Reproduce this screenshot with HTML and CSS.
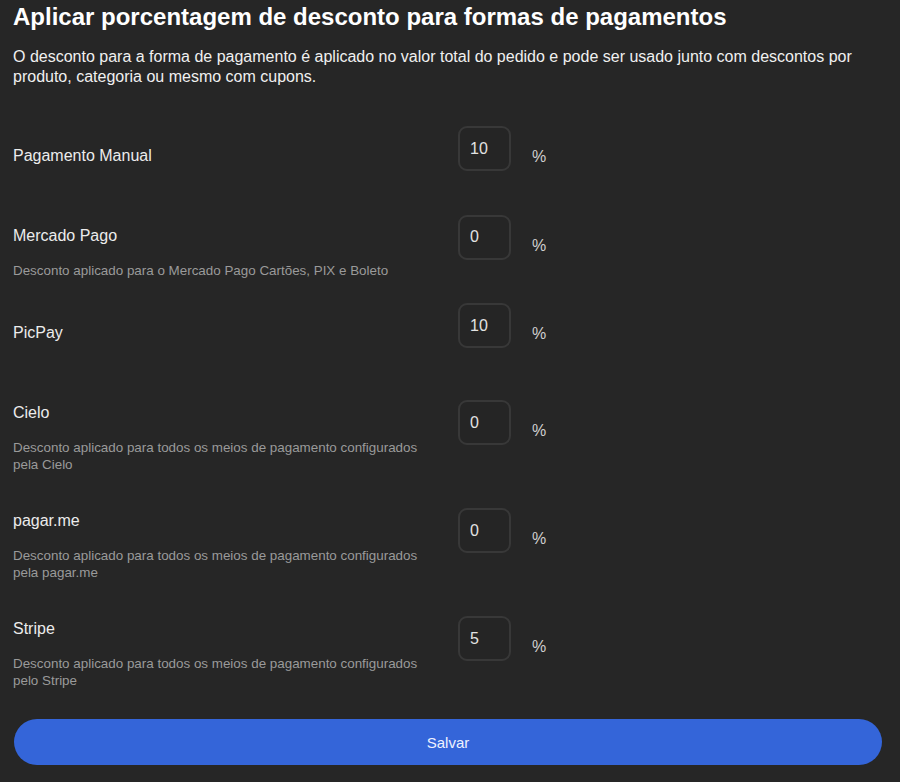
FILE: index.html
```html
<!DOCTYPE html>
<html lang="pt-BR">
<head>
<meta charset="utf-8">
<title>Descontos por forma de pagamento</title>
<link rel="stylesheet" href="styles.css">
</head>
<body>
<form class="discounts">
  <h1 class="discounts-title">Aplicar porcentagem de desconto para formas de pagamentos</h1>
  <p class="discounts-intro">O desconto para a forma de pagamento é aplicado no valor total do pedido e pode ser usado junto com descontos por produto, categoria ou mesmo com cupons.</p>

  <div class="gateways">
    <div class="gateway">
      <div class="gateway-info">
        <div class="gateway-name">Pagamento Manual</div>
      </div>
      <div class="rate">
        <div class="rate-box"><input class="rate-input" type="text" value="10"></div>
        <span class="rate-unit">%</span>
      </div>
    </div>

    <div class="gateway">
      <div class="gateway-info">
        <div class="gateway-name">Mercado Pago</div>
        <div class="gateway-help">Desconto aplicado para o Mercado Pago Cartões, PIX e Boleto</div>
      </div>
      <div class="rate">
        <div class="rate-box"><input class="rate-input" type="text" value="0"></div>
        <span class="rate-unit">%</span>
      </div>
    </div>

    <div class="gateway">
      <div class="gateway-info">
        <div class="gateway-name">PicPay</div>
      </div>
      <div class="rate">
        <div class="rate-box"><input class="rate-input" type="text" value="10"></div>
        <span class="rate-unit">%</span>
      </div>
    </div>

    <div class="gateway">
      <div class="gateway-info">
        <div class="gateway-name">Cielo</div>
        <div class="gateway-help">Desconto aplicado para todos os meios de pagamento configurados pela Cielo</div>
      </div>
      <div class="rate">
        <div class="rate-box"><input class="rate-input" type="text" value="0"></div>
        <span class="rate-unit">%</span>
      </div>
    </div>

    <div class="gateway">
      <div class="gateway-info">
        <div class="gateway-name">pagar.me</div>
        <div class="gateway-help">Desconto aplicado para todos os meios de pagamento configurados pela pagar.me</div>
      </div>
      <div class="rate">
        <div class="rate-box"><input class="rate-input" type="text" value="0"></div>
        <span class="rate-unit">%</span>
      </div>
    </div>

    <div class="gateway">
      <div class="gateway-info">
        <div class="gateway-name">Stripe</div>
        <div class="gateway-help">Desconto aplicado para todos os meios de pagamento configurados pelo Stripe</div>
      </div>
      <div class="rate">
        <div class="rate-box"><input class="rate-input" type="text" value="5"></div>
        <span class="rate-unit">%</span>
      </div>
    </div>
  </div>

  <button class="save-btn" type="button">Salvar</button>
</form>
</body>
</html>
```

FILE: styles.css
```css
/** PAGE **/
html, body {
  margin: 0;
  background: #262626;
}

body {
  font-family: "Liberation Sans", Arial, Helvetica, sans-serif;
  color: #ececec;
}

.discounts {
  padding: 3px 18px 0 13px;
}

.discounts-title {
  margin: 0;
  font-size: 24px;
  line-height: 28px;
  font-weight: bold;
  color: #ffffff;
}

.discounts-intro {
  margin: 16px 0 0;
  font-size: 16px;
  line-height: 20px;
  color: #f0f0f0;
}

/** GATEWAY ROWS **/
.gateways {
  display: flex;
  flex-direction: column;
  gap: 24px;
  margin-top: 39px;
}

.gateway {
  display: flex;
  align-items: center;
}

.gateway-info {
  flex: 0 0 445px;
  box-sizing: border-box;
  padding: 12px 20px 0 0;
}

.gateway-name {
  font-size: 16px;
  line-height: 20px;
  margin: 2px 0 16px;
  color: #ececec;
}

.gateway-help {
  font-size: 13.4px;
  line-height: 17px;
  color: #9a9a9a;
}

.rate {
  display: flex;
  align-items: center;
  gap: 21px;
}

.rate-box {
  padding-bottom: 17px;
}

.rate-input {
  display: block;
  box-sizing: border-box;
  width: 53px;
  height: 45px;
  padding: 0 10px;
  border: 2px solid #383838;
  border-radius: 9px;
  background: #252525;
  color: #e2e2e2;
  font-family: "Liberation Sans", Arial, sans-serif;
  font-size: 16px;
  outline: none;
}

.rate-unit {
  font-size: 16px;
  line-height: 20px;
  color: #d0d0d0;
}

/** SAVE **/
.save-btn {
  display: block;
  width: 868px;
  height: 46px;
  margin: 30px 0 0 1px;
  border: none;
  border-radius: 23px;
  background: #3465d9;
  color: #eef2ff;
  font-family: "Liberation Sans", Arial, sans-serif;
  font-size: 15px;
  cursor: pointer;
}
```
